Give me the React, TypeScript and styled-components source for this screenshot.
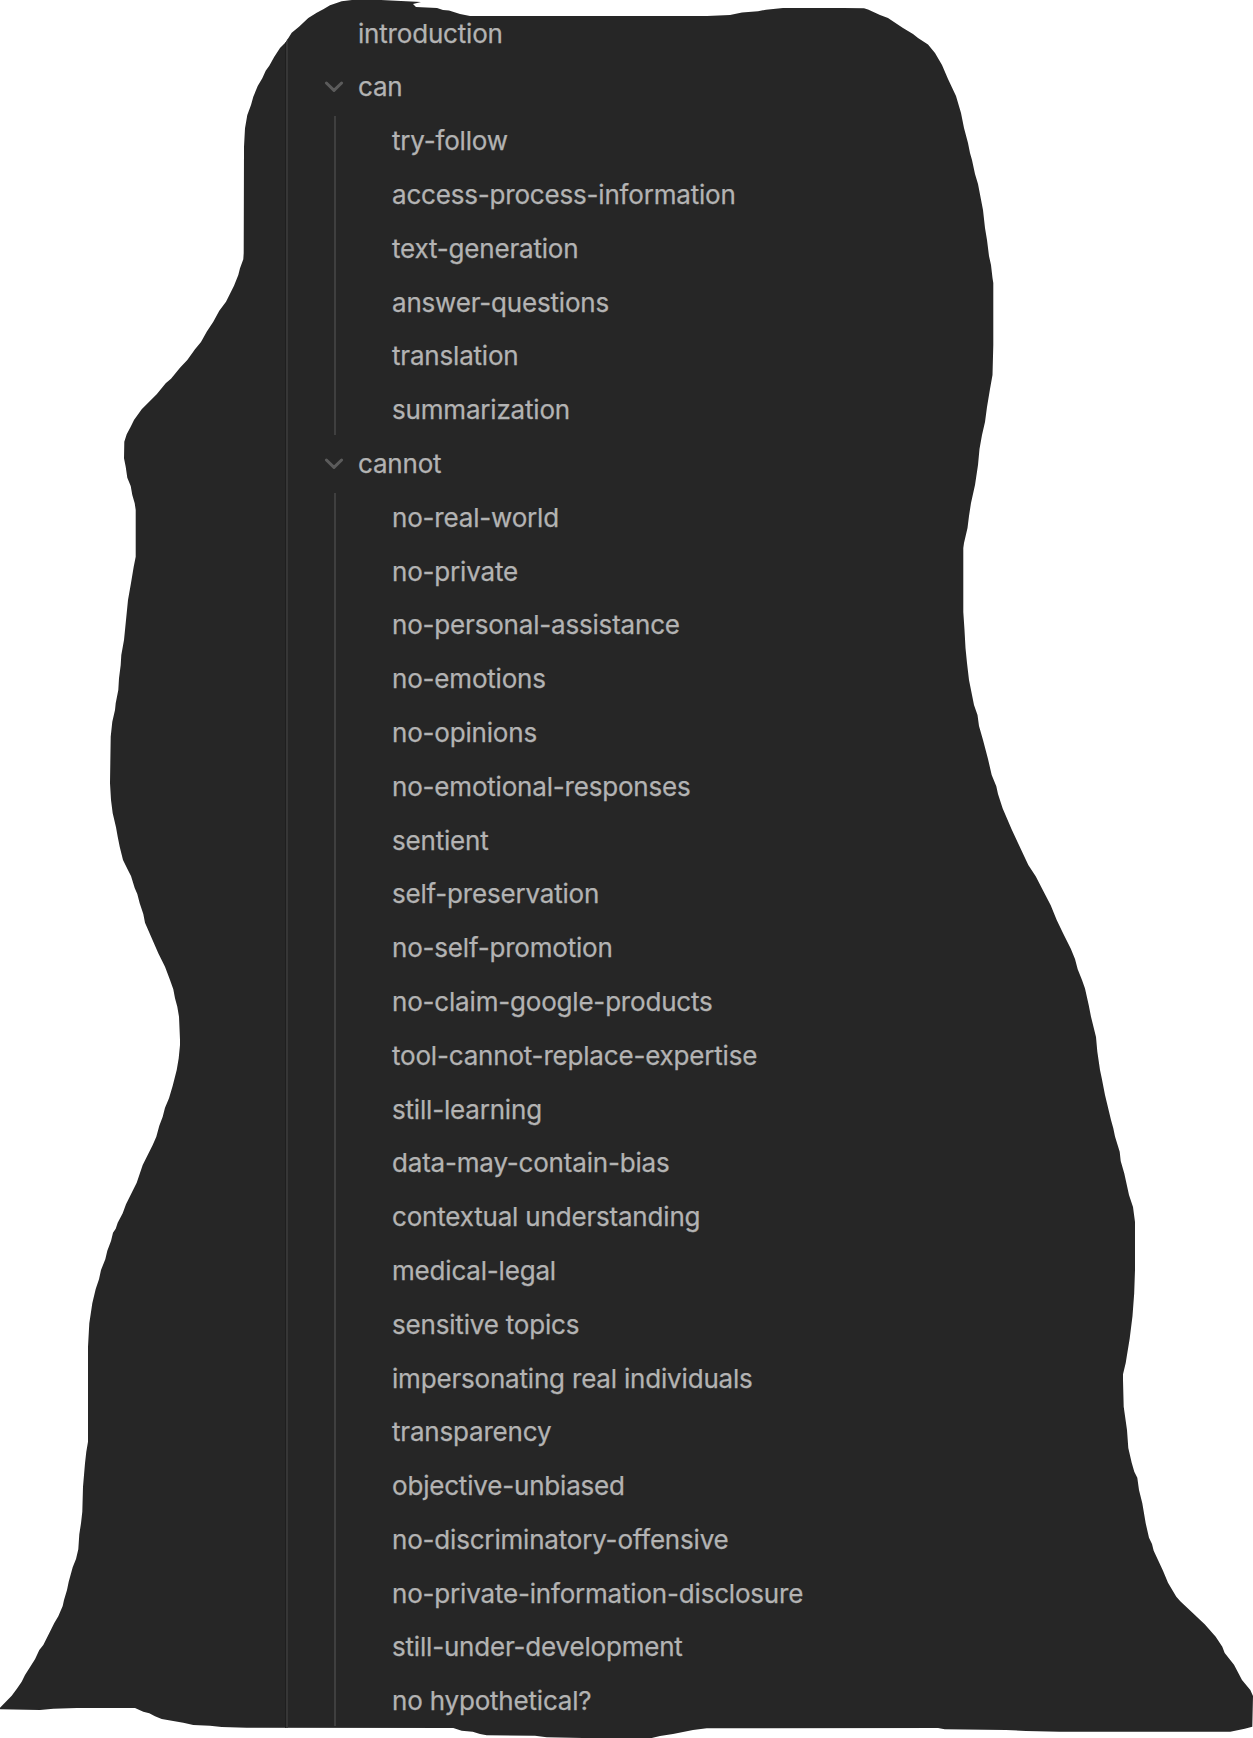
import React from "react";
import styled, { createGlobalStyle } from "styled-components";

const GlobalStyle = createGlobalStyle`
  body {
    margin: 0;
    background: #ffffff;
  }
`;

// Hand-cut silhouette of the panel, clockwise from the top edge.
const OUTLINE = `
352,0 381,0 421,2 413,4 416,7 437,8 443,10 449,10.5 460,14 470,16 707,16 730,15 742,12.5 758,11.3
766,9.7 783,8 843,8 864,8.3 868,9.5 880,15 888,18 903,28 913,34 918,38 928,44.5 935,53 942,65 948,79
956,96 961,113 964,128 968,143 970,153 972,160 975,174 978,184 983,210 985,228 987,240 989,256 991,265
992.5,278 993.3,283 993.3,345 992.5,375 990,389 987,407 985,422 982,435 979.5,449 978,465 975,485
971,503 969,516 967.5,528 964,543 963.3,548 963.3,612 964.5,630 965.5,648 967,663 969,680 972,695 974,705
977.5,715 979,726 983,740 988,759 991.7,775 996.3,786.3 998,794 1002.7,808.4 1011.7,829.5 1028.3,865
1035.7,876.3 1043.3,891 1050.7,905.2 1056.7,920 1063.3,933.7 1070.7,948.4 1075,959 1077.7,969.2
1082,980 1085,988.5 1088.7,1005 1091,1016.7 1096,1037 1097.3,1051.5 1100,1070 1101.7,1078 1105,1095 1111,1120
1113.3,1128.3 1115,1136.6 1119.7,1151.8 1120.7,1161 1124.3,1173.6 1129,1195 1133,1207 1135,1222 1135,1270
1134.2,1293.3 1132.5,1316 1129.7,1338.5 1126.7,1356.8 1125.7,1363 1123,1374.3 1123,1380 1123.7,1406.7
1127,1430 1128.3,1448 1131.7,1462.7 1134.3,1471.7 1137.3,1477.7 1139,1490 1142.3,1503.3 1145.7,1523.3
1149,1537.7 1152,1544 1153.7,1550.7 1158,1560 1163,1570.7 1168,1582.7 1176.3,1596.7 1180.3,1601.3
1204.7,1624.3 1215.7,1636.7 1222.3,1646.7 1224.7,1653 1234,1664.7 1242,1680 1250.3,1690 1253,1696
1252.3,1726.7 1244.7,1728.7 1230.3,1731.7 1059.7,1731.7 1026,1731 1006,1730 944.7,1729.3 938,1728
706.7,1728.3 693,1730 673,1734 660,1736 651.7,1738 583,1738 546.7,1737.3 535,1735.7 486.7,1735.3
480,1734 472.7,1731.7 461.7,1730.7 453.3,1728 246.7,1727.7 221.7,1727 210,1725.7 193.3,1725 183.3,1722.7
161.7,1719 155,1716.3 149.3,1713.3 143.3,1711.7 135,1708 76.7,1708 53.3,1708.7 40,1710 0,1709.3 0,1707.7
11.7,1695.7 16.7,1689 21.7,1681.7 25,1675 35,1659.3 39.3,1650 43.3,1645 51.7,1628.3 54.3,1623
58.3,1616.3 62.7,1606 64,1600 67,1590 68.7,1581.7 72.7,1567.3 76,1559 78.3,1549.3 79.3,1534.3 81,1523.3
82.3,1511.7 83,1486.7 85,1463.3 86.3,1451.7 88,1441.7 88,1346.7 89.3,1323.3 91.3,1310 92.3,1303.3
95.7,1289 99,1279.3 101,1270 105.3,1259.3 107.3,1250.7 111,1241 113,1232.7 115.7,1228.7 117.7,1222.7
122.7,1213.3 126,1204.3 136.7,1182.7 142.7,1165 152.7,1145 156.3,1136.7 159.3,1125.7 162.7,1116.7
165,1107.7 169,1098.3 172.7,1085.7 176.7,1070 178.7,1058.3 180,1045 180,1040 179,1016.7 177.3,1006.7
175,998.3 173.3,989.3 170,980 165,966.7 158.3,953.3 145,922.7 143.3,914 139.7,903.3 137.3,894 134.7,888
131,876 128.3,870.7 123,860 119.7,846.7 117.7,836.7 116,827.3 112.7,813.3 111,800 110,783.3 110.7,736.7
112.3,721.7 115,710 115.7,703.3 118.3,690 119,678.3 120.7,665 121.3,655 124,640 126,620 128,600 131,583
133.7,566.7 135.7,556.7 135.7,510 134.7,503.3 132.3,495 130.7,486 127.3,477.7 125.7,466.7 124,458.3
124.3,441.7 126.7,434.3 130.7,426.7 134,420 141.7,409.3 156.7,394.3 165.7,383.3 171,378.7 180,367.7
187.3,360 195,349.3 201,342 206.7,331.7 213.3,321.7 219.3,310.7 226,301.7 234,285.7 238.3,275 240,268.3
243.3,259.3 243.7,253 244,146.7 245,128.3 247.3,115 251,105 253.3,96.7 257.7,86 262.3,78.3 265.7,70.7
269.3,65.7 274.3,56.7 280,48 285.7,42.3 291.7,32.7 299,26.7 308.3,18 316.7,12.7 323.3,9.3 330,5.3 341.7,1.3
`;

const outlinePolygon = OUTLINE.trim()
  .split(/\s+/)
  .map((point) => point.split(",").map((n) => `${n}px`).join(" "))
  .join(", ");

const Panel = styled.main`
  box-sizing: border-box;
  width: 1253px;
  height: 1738px;
  padding-left: 285px;
  background: #262626;
  clip-path: polygon(${outlinePolygon});
  overflow: hidden;
`;

const Tree = styled.div`
  box-sizing: border-box;
  height: 1728px;
  padding-top: 6.7px;
  border-left: 1px solid #1e1e1e;
  box-shadow: inset 2px 0 0 #363636;
  font-family: Inter, "Liberation Sans", sans-serif;
  font-size: 26px;
  font-weight: 400;
  color: #b3b3b3;
`;

const Row = styled.div<{ $nested?: boolean }>`
  display: flex;
  align-items: center;
  height: 53.8px;
  padding-left: ${(p) => (p.$nested ? "56px" : "38px")};
  white-space: nowrap;
`;

const ToggleSlot = styled.span`
  display: flex;
  width: 34px;
  flex: none;
`;

const Label = styled.span`
  line-height: 32px;
  letter-spacing: -0.19px;
  -webkit-text-stroke: 0.25px #b3b3b3;
`;

const Children = styled.div`
  display: flex;
  margin-left: 48px;
`;

const Guide = styled.div`
  width: 2px;
  margin: 1.9px 0 2.1px;
  background: #3f3f3f;
`;

const Chevron = () => (
  <svg width="20" height="14" viewBox="0 0 20 14" fill="none">
    <path
      d="M2.4 3L10 10.4L17.6 3"
      stroke="#5b5b5b"
      strokeWidth="3"
      strokeLinecap="round"
      strokeLinejoin="round"
    />
  </svg>
);

type Folder = { name: string; notes?: string[] };

const FOLDERS: Folder[] = [
  { name: "introduction" },
  {
    name: "can",
    notes: [
      "try-follow",
      "access-process-information",
      "text-generation",
      "answer-questions",
      "translation",
      "summarization",
    ],
  },
  {
    name: "cannot",
    notes: [
      "no-real-world",
      "no-private",
      "no-personal-assistance",
      "no-emotions",
      "no-opinions",
      "no-emotional-responses",
      "sentient",
      "self-preservation",
      "no-self-promotion",
      "no-claim-google-products",
      "tool-cannot-replace-expertise",
      "still-learning",
      "data-may-contain-bias",
      "contextual understanding",
      "medical-legal",
      "sensitive topics",
      "impersonating real individuals",
      "transparency",
      "objective-unbiased",
      "no-discriminatory-offensive",
      "no-private-information-disclosure",
      "still-under-development",
      "no hypothetical?",
    ],
  },
];

export default function App() {
  return (
    <>
      <GlobalStyle />
      <Panel>
        <Tree>
          {FOLDERS.map((folder) => (
            <React.Fragment key={folder.name}>
              <Row>
                <ToggleSlot>{folder.notes && <Chevron />}</ToggleSlot>
                <Label>{folder.name}</Label>
              </Row>
              {folder.notes && (
                <Children>
                  <Guide />
                  <div>
                    {folder.notes.map((note) => (
                      <Row key={note} $nested>
                        <Label>{note}</Label>
                      </Row>
                    ))}
                  </div>
                </Children>
              )}
            </React.Fragment>
          ))}
        </Tree>
      </Panel>
    </>
  );
}
